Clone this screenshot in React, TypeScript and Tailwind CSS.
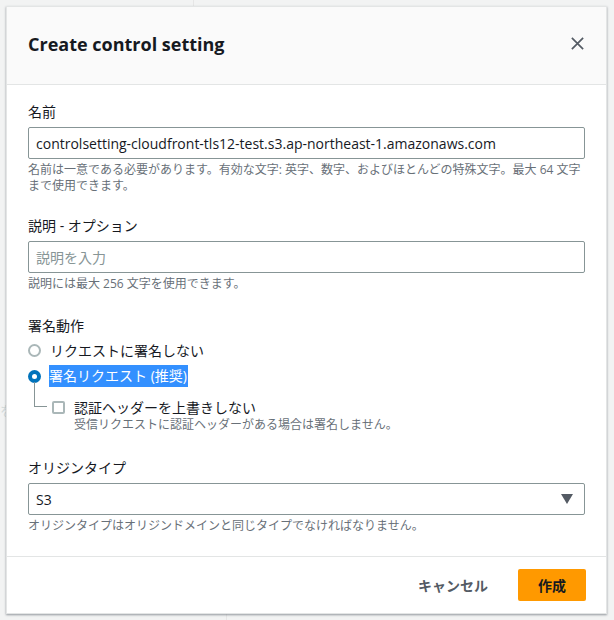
import React from 'react';

const font = { fontFamily: '"Open Sans", "Noto Sans CJK JP", sans-serif' };

const Hint: React.FC<{ children: React.ReactNode }> = ({ children }) => (
  <p className="mt-[3px] text-[12px] leading-[16px] text-[#687078]">{children}</p>
);

const Label: React.FC<{ children: React.ReactNode }> = ({ children }) => (
  <div className="mb-[4px] text-[14px] leading-[22px] text-[#16191f]">{children}</div>
);

export default function App() {
  return (
    <div className="relative h-[620px] w-[614px] overflow-hidden bg-[#f2f3f3]" style={font}>
      {/* page behind the modal */}
      <div className="absolute left-[193px] top-0 h-[6px] w-px bg-[#e6e6e6]" />
      <div className="absolute left-[226px] bottom-0 h-[6px] w-px bg-[#e6e6e6]" />
      <div className="absolute left-0 top-[400px] text-[14px] text-[#d5dbdb]">を</div>

      <div className="absolute left-[6px] top-[6px] flex h-[608px] w-[601px] flex-col border border-[#e3e5e5] bg-white shadow-[0_1px_2px_rgba(84,91,100,0.6)]">
        <div className="flex h-[78px] items-center justify-between border-b border-[#e3e5e5] bg-[#fafafa] pb-[4px] pl-[21px] pr-[17px]">
          <h2 className="text-[18px] font-bold leading-[22px] text-[#16191f]">Create control setting</h2>
          <button className="flex h-6 w-6 items-center justify-center text-[#545b64]">
            <svg width="15" height="15" viewBox="0 0 16 16" fill="none" stroke="currentColor" strokeWidth="1.8">
              <path d="M2 2l12 12M14 2L2 14" />
            </svg>
          </button>
        </div>

        <div className="flex-1 px-[21px] pt-[16px]">
          <Label>名前</Label>
          <div className="flex h-[32px] items-center rounded-[2px] border border-[#879596] px-[7px] text-[14px] text-[#16191f]">
            controlsetting-cloudfront-tls12-test.s3.ap-northeast-1.amazonaws.com
          </div>
          <Hint>
            名前は一意である必要があります。有効な文字: 英字、数字、およびほとんどの特殊文字。最大 64 文字
            <br />
            まで使用できます。
          </Hint>

          <div className="mt-[21px]">
            <Label>説明 - オプション</Label>
            <div className="flex h-[32px] items-center rounded-[2px] border border-[#879596] px-[7px] text-[14px] text-[#879596]">
              説明を入力
            </div>
            <Hint>説明には最大 256 文字を使用できます。</Hint>
          </div>

          <div className="mt-[23px]">
            <div className="text-[14px] leading-[22px] text-[#16191f]">署名動作</div>
            <div className="mt-[2px] flex h-[22px] items-center gap-[9px] text-[14px] text-[#16191f]">
              <span className="h-[13px] w-[13px] rounded-full border-2 border-[#aab7b8] bg-white" />
              <span>リクエストに署名しない</span>
            </div>
            <div className="relative mt-[4px] flex h-[22px] items-center gap-[8px] text-[14px]">
              <span className="flex h-[13px] w-[13px] items-center justify-center rounded-full bg-[#0073bb]">
                <span className="h-[5px] w-[5px] rounded-full bg-white" />
              </span>
              <span className="bg-[#3390ff] pr-[1px] leading-[22px] text-white">署名リクエスト (推奨)</span>
            </div>
            <div className="relative mt-[10px] pl-[24px]">
              <div className="absolute left-[6px] top-[-15px] h-[25px] w-[13px] border-b border-l border-[#879596]" />
              <div className="flex h-[20px] items-center gap-[9px] text-[14px] text-[#16191f]">
                <span className="h-[13px] w-[13px] rounded-[2px] border-2 border-[#aab7b8] bg-white" />
                <span>認証ヘッダーを上書きしない</span>
              </div>
              <p className="pl-[22px] text-[12px] leading-[16px] text-[#687078]">
                受信リクエストに認証ヘッダーがある場合は署名しません。
              </p>
            </div>
          </div>

          <div className="mt-[24px]">
            <Label>オリジンタイプ</Label>
            <div className="flex h-[32px] items-center justify-between rounded-[2px] border border-[#879596] pl-[7px] pr-[11px] text-[14px] text-[#16191f]">
              <span>S3</span>
              <svg width="12" height="10" viewBox="0 0 12 10">
                <path d="M0 0h12L6 10z" fill="#545b64" />
              </svg>
            </div>
            <Hint>オリジンタイプはオリジンドメインと同じタイプでなければなりません。</Hint>
          </div>
        </div>

        <div className="flex h-[57px] items-center justify-end gap-[10px] border-t border-[#e3e5e5] pr-[20px]">
          <button className="px-[20px] py-[4px] text-[14px] font-bold text-[#545b64]">キャンセル</button>
          <button className="h-[32px] rounded-[2px] bg-[#ff9900] px-[20px] text-[14px] font-bold text-[#16191f]">作成</button>
        </div>
      </div>
    </div>
  );
}
